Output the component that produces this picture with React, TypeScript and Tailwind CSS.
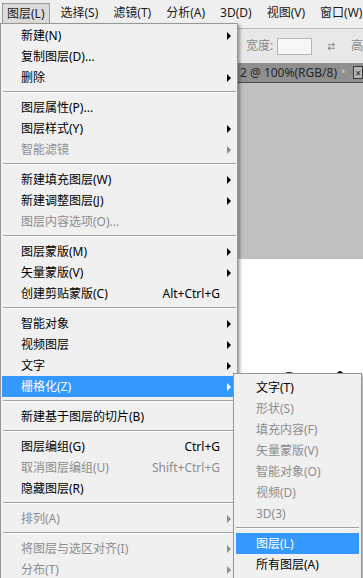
import React from "react";

type Item =
  | { sep: true }
  | { label: string; disabled?: boolean; arrow?: boolean; shortcut?: string; active?: boolean; sep?: false };

const mainItems: Item[] = [
  { label: "新建(N)", arrow: true },
  { label: "复制图层(D)..." },
  { label: "删除", arrow: true },
  { sep: true },
  { label: "图层属性(P)..." },
  { label: "图层样式(Y)", arrow: true },
  { label: "智能滤镜", arrow: true, disabled: true },
  { sep: true },
  { label: "新建填充图层(W)", arrow: true },
  { label: "新建调整图层(J)", arrow: true },
  { label: "图层内容选项(O)...", disabled: true },
  { sep: true },
  { label: "图层蒙版(M)", arrow: true },
  { label: "矢量蒙版(V)", arrow: true },
  { label: "创建剪贴蒙版(C)", shortcut: "Alt+Ctrl+G" },
  { sep: true },
  { label: "智能对象", arrow: true },
  { label: "视频图层", arrow: true },
  { label: "文字", arrow: true },
  { label: "栅格化(Z)", arrow: true, active: true },
  { sep: true },
  { label: "新建基于图层的切片(B)" },
  { sep: true },
  { label: "图层编组(G)", shortcut: "Ctrl+G" },
  { label: "取消图层编组(U)", shortcut: "Shift+Ctrl+G", disabled: true },
  { label: "隐藏图层(R)" },
  { sep: true },
  { label: "排列(A)", arrow: true, disabled: true },
  { sep: true },
  { label: "将图层与选区对齐(I)", arrow: true, disabled: true },
  { label: "分布(T)", arrow: true, disabled: true },
];

const subItems: Item[] = [
  { label: "文字(T)" },
  { label: "形状(S)", disabled: true },
  { label: "填充内容(F)", disabled: true },
  { label: "矢量蒙版(V)", disabled: true },
  { label: "智能对象(O)", disabled: true },
  { label: "视频(D)", disabled: true },
  { label: "3D(3)", disabled: true },
  { sep: true },
  { label: "图层(L)", active: true },
  { label: "所有图层(A)" },
];

function Arrow({ color }: { color: "black" | "gray" | "white" }) {
  const cls =
    color === "black"
      ? "border-l-black"
      : color === "white"
      ? "border-l-white"
      : "border-l-[#8d8d8d]";
  return (
    <span
      className={`block w-0 h-0 border-y-[4px] border-y-transparent border-l-[4px] ${cls}`}
    />
  );
}

function Sep() {
  return (
    <div className="h-[9px] pt-[3px] ml-[1px] -mr-[2px]">
      <div className="h-px bg-[#a0a0a0]" />
      <div className="h-px bg-white" />
    </div>
  );
}

function MainRow({ it }: { it: Exclude<Item, { sep: true }> }) {
  const txt = it.active ? "text-white" : it.disabled ? "text-[#8d8d8d]" : "text-black";
  return (
    <div
      className={`flex items-center h-[21px] pl-[19px] ${it.active ? "bg-[#3399ff]" : ""} ${txt}`}
    >
      <span className="flex-1 whitespace-nowrap">{it.label}</span>
      {it.shortcut && <span className="whitespace-nowrap">{it.shortcut}</span>}
      <span className="w-[14px] pl-[7px] flex items-center">
        {it.arrow && <Arrow color={it.active ? "white" : it.disabled ? "gray" : "black"} />}
      </span>
    </div>
  );
}

function SubRow({ it }: { it: Exclude<Item, { sep: true }> }) {
  const txt = it.active ? "text-white" : it.disabled ? "text-[#8d8d8d]" : "text-black";
  return (
    <div
      className={`flex items-center h-[21px] pl-[20px] ${it.active ? "bg-[#3399ff]" : ""} ${txt}`}
    >
      <span className="whitespace-nowrap">{it.label}</span>
    </div>
  );
}

export default function App() {
  const barItems = ["图层(L)", "选择(S)", "滤镜(T)", "分析(A)", "3D(D)", "视图(V)", "窗口(W)"];
  return (
    <div className="relative w-[363px] h-[578px] overflow-hidden bg-[#efefef] text-[12px] leading-none font-['Noto_Sans','Noto_Sans_CJK_SC',sans-serif]">
      {/* menu bar */}
      <div className="h-[29px] flex items-start pt-[3px] pl-[2px] gap-[7px] bg-[#efefef] border-b border-[#b9b9b9] whitespace-nowrap">
        {barItems.map((b, i) => (
          <span
            key={b}
            className={`h-[20px] px-[4px] flex items-center text-[#1a1a1a] ${
              i === 0 ? "bg-[#dcdcdc] border border-[#9a9a9a] border-b-0 px-[3px]" : ""
            }`}
          >
            {b}
          </span>
        ))}
      </div>

      {/* options bar */}
      <div className="h-[34px] flex items-center pl-[246px] bg-[#e8e8e8] whitespace-nowrap">
        <span className="text-[#8a8a8a]">宽度:</span>
        <span className="ml-[4px] w-[40px] h-[17px] bg-[#f7f7f7] border border-[#b5b5b5]" />
        <svg className="ml-[15px]" width="10" height="9" viewBox="0 0 10 9">
          <path d="M1 2.5H8.5M6.5 0.5L8.5 2.5L6.5 4.5" stroke="#8a8a8a" strokeWidth="1.2" fill="none" />
          <path d="M9 6.5H1.5M3.5 4.5L1.5 6.5L3.5 8.5" stroke="#8a8a8a" strokeWidth="1.2" fill="none" />
        </svg>
        <span className="ml-[15px] text-[#8a8a8a]">高</span>
      </div>

      {/* document tab */}
      <div className="h-[20px] flex items-center pl-[240px] bg-[#8f8f8f] border-b border-[#4a4a4a] whitespace-nowrap">
        <span className="text-[#262626]">2 @ 100%(RGB/8)</span>
        <span className="ml-[4px] text-[8px] text-[#cfcfcf]">*</span>
        <span className="ml-[8px] w-[11px] h-[13px] flex items-center justify-center border border-[#3a3a3a] bg-[#b5b5b5] text-[10px] text-[#222]">
          ×
        </span>
      </div>

      {/* canvas */}
      <div className="h-[176px] bg-[#c0c0c0]" />
      <div className="relative h-[400px] bg-white">
        <svg className="absolute left-[270px] top-[105px]" width="93" height="20" viewBox="0 0 93 20">
          <ellipse cx="19" cy="14" rx="8" ry="6" fill="#111" />
          <ellipse cx="70" cy="13" rx="4" ry="6" fill="#111" />
          <ellipse cx="83" cy="14" rx="4" ry="5" fill="#111" />
        </svg>
      </div>

      {/* dropdown menu */}
      <div className="absolute left-0 top-[23px] w-[238px] bottom-[-20px] bg-[#f0f0f0] border border-[#979797] pt-[1px] pl-[1px] pr-[3px] shadow-[2px_2px_3px_rgba(0,0,0,0.35)]">
        {mainItems.map((it, i) =>
          it.sep ? <Sep key={i} /> : <MainRow key={i} it={it} />
        )}
      </div>

      {/* submenu */}
      <div className="absolute left-[233px] top-[373px] w-[129px] bottom-[-20px] bg-[#f0f0f0] border border-[#979797] pt-[3px] px-[2px] shadow-[2px_2px_3px_rgba(0,0,0,0.35)]">
        {subItems.map((it, i) =>
          it.sep ? (
            <div key={i} className="h-[9px] pt-[3px]">
              <div className="h-px bg-[#a0a0a0]" />
              <div className="h-px bg-white" />
            </div>
          ) : (
            <SubRow key={i} it={it} />
          )
        )}
      </div>
    </div>
  );
}
